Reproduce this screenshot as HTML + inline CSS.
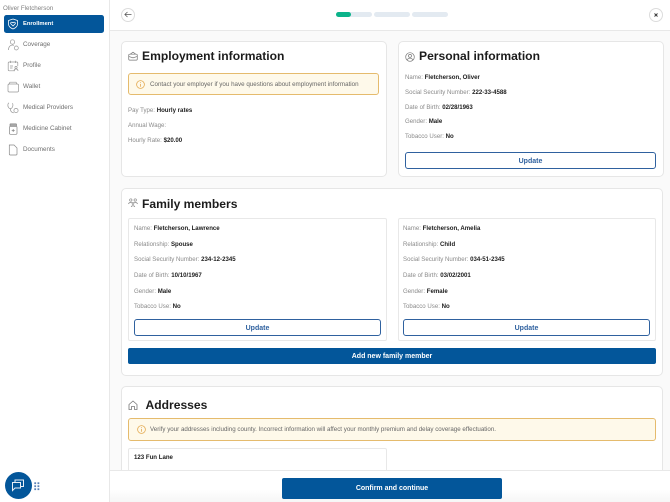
<!DOCTYPE html>
<html lang="en">
<head>
<meta charset="utf-8">
<title>Enrollment</title>
<style>
html,body{margin:0;padding:0;width:670px;height:502px;overflow:hidden;}
body{position:relative;background:#fafafa;font-family:"Liberation Sans",sans-serif;color:#1a1a1a;}
.a{position:absolute;box-sizing:border-box;}
.t{position:absolute;white-space:nowrap;font-size:6.1px;line-height:10px;height:10px;margin-top:1px;color:#8a8a8a;}
.t b{color:#1c1c1c;font-weight:700;}
.nav{position:absolute;left:23px;white-space:nowrap;font-size:6.3px;line-height:10px;margin-top:1px;color:#6f6f6f;}
.card{position:absolute;box-sizing:border-box;background:#fff;border:1px solid #e6e6e6;border-radius:5px;}
.sub{position:absolute;box-sizing:border-box;background:#fff;border:1px solid #e8e8e8;border-radius:2px;}
.h{position:absolute;white-space:nowrap;font-size:12.1px;line-height:16px;font-weight:700;color:#1c1c1c;}
.alert{position:absolute;box-sizing:border-box;background:#fef9ea;border:1px solid #e5bb6d;border-radius:3px;}
.btn{position:absolute;box-sizing:border-box;background:#fff;border:1px solid #2f619f;border-radius:3px;color:#2f619f;font-size:7px;font-weight:700;text-align:center;}
.fill{position:absolute;box-sizing:border-box;background:#03569a;border-radius:2px;color:#fff;font-size:7px;font-weight:700;text-align:center;}
svg{position:absolute;overflow:visible;fill:none;}
</style>
</head>
<body>

<!-- Sidebar -->
<div class="a" style="left:0;top:0;width:110px;height:502px;background:#fff;border-right:1px solid #e8e8e8;"></div>
<div class="t" style="left:3px;top:3px;font-size:6.2px;color:#808080;">Oliver Fletcherson</div>
<div class="a" style="left:4px;top:15px;width:100px;height:18px;background:#03569a;border-radius:2.5px;"></div>
<svg style="left:6.500px;top:17.500px" width="12" height="12" viewBox="0 0 12 12" stroke="#fff" stroke-width=".8"><path d="M6 1 L10.500 2.500 V6 C10.500 8.500 8.500 10 6 11 C3.500 10 1.500 8.500 1.500 6 V2.500Z"/><path d="M6 8 L3.800 5.800 C3 4.500 5 3.500 6 4.800 C7 3.500 9 4.500 8.200 5.800Z"/></svg>
<div class="nav" style="top:18px;color:#fff;font-weight:700;font-size:5.8px;">Enrollment</div>
<div class="nav" style="top:39px;">Coverage</div>
<div class="nav" style="top:60px;">Profile</div>
<div class="nav" style="top:81px;">Wallet</div>
<div class="nav" style="top:102px;">Medical Providers</div>
<div class="nav" style="top:123px;">Medicine Cabinet</div>
<div class="nav" style="top:144px;">Documents</div>
<!-- Nav icons -->
<svg style="left:7px;top:39px" width="12" height="12" viewBox="0 0 12 12" stroke="#969696" stroke-width=".7"><circle cx="5.500" cy="3" r="2.200"/><path d="M1.500 11 C1.500 7.500 3.500 6 5.500 6 C6 6 6.500 6.100 7 6.300"/><circle cx="9.300" cy="9" r="2"/></svg>
<svg style="left:7px;top:60px" width="12" height="12" viewBox="0 0 12 12" stroke="#969696" stroke-width=".7"><path d="M8 10.800H2.200A1 1 0 0 1 1.200 9.800V3A1 1 0 0 1 2.200 2H9.800A1 1 0 0 1 10.800 3V6"/><path d="M3.500 .8V3M8.500 .8V3M3 6H6M3 8H5.500"/><circle cx="9" cy="7.500" r="1.100"/><path d="M7 11C7 9.500 8 9 9 9S11 9.500 11 11"/></svg>
<svg style="left:7px;top:81px" width="12" height="12" viewBox="0 0 12 12" stroke="#969696" stroke-width=".7"><rect x="1" y="3" width="10.500" height="8" rx="1.300"/><path d="M2 3L3 1.200H9L10 3"/></svg>
<svg style="left:7px;top:102px" width="12" height="12" viewBox="0 0 12 12" stroke="#969696" stroke-width=".7"><path d="M2 .8C.5 1.500.6 4 1.500 5.500C2.300 6.800 3.800 7 4.800 6C6 4.800 6.300 2.500 5.500 1.200"/><path d="M3.300 6.800C3.500 9.500 5 11 7 10.800"/><circle cx="9" cy="8.500" r="2.100"/></svg>
<svg style="left:7px;top:123px" width="12" height="12" viewBox="0 0 12 12" stroke="#858585" stroke-width=".7"><rect x="2.500" y="3.300" width="7.500" height="8" rx="1"/><rect x="3" y=".8" width="6.500" height="2.500" rx=".5" fill="#a8a8a8"/><path d="M6.200 6V9M4.700 7.500H7.700"/></svg>
<svg style="left:7px;top:144px" width="12" height="12" viewBox="0 0 12 12" stroke="#888" stroke-width=".7"><path d="M2.300 1H7L10 4V10A1 1 0 0 1 9 11H3.300A1 1 0 0 1 2.300 10Z"/></svg>

<!-- Header -->
<div class="a" style="left:110px;top:0;width:560px;height:31px;background:#fff;border-bottom:1px solid #e8e8e8;"></div>
<div class="a" style="left:121px;top:7.500px;width:14px;height:14px;border:1px solid #dcdcdc;border-radius:50%;"></div>
<svg style="left:124px;top:11px" width="8" height="8" viewBox="0 0 8 8" stroke="#555" stroke-width=".7"><path d="M7.500 3.500H.8M3.500 1L.8 3.500L3.500 6"/></svg>
<div class="a" style="left:336px;top:12px;width:36px;height:4.500px;background:#e3eaf1;border-radius:3px;"></div>
<div class="a" style="left:336px;top:12px;width:14.500px;height:4.500px;background:#0bb38a;border-radius:3px;"></div>
<div class="a" style="left:374px;top:12px;width:36px;height:4.500px;background:#e3eaf1;border-radius:3px;"></div>
<div class="a" style="left:412px;top:12px;width:36px;height:4.500px;background:#e3eaf1;border-radius:3px;"></div>
<div class="a" style="left:649px;top:7.500px;width:14px;height:14px;border:1px solid #dcdcdc;border-radius:50%;"></div>
<svg style="left:654px;top:12.500px" width="4" height="4" viewBox="0 0 4 4" stroke="#333" stroke-width=".9"><path d="M.5.5L3.500 3.500M3.500.5L.5 3.500"/></svg>

<!-- Employment card -->
<div class="card" style="left:121px;top:40.500px;width:266px;height:136px;"></div>
<svg style="left:128px;top:51px" width="10" height="10" viewBox="0 0 11 11" stroke="#777" stroke-width=".8"><rect x=".8" y="3.500" width="9.400" height="6.500" rx="1"/><path d="M.8 6L5.500 7.500L10.200 6M2.500 3.500L5.500 1.300L8.500 3.500"/></svg>
<div class="h" style="left:142px;top:48px;">Employment information</div>
<div class="alert" style="left:128px;top:73px;width:251px;height:22px;"></div>
<svg style="left:136px;top:79.500px" width="9" height="9" viewBox="0 0 9 9" stroke="#e3a94f" stroke-width=".8"><circle cx="4.500" cy="4.500" r="3.900"/><path d="M4.500 4V6.700M4.500 2.300V3.100"/></svg>
<div class="t" style="left:150px;top:79px;color:#666;font-size:6.240px;">Contact your employer if you have questions about employment information</div>
<div class="t" style="left:128px;top:104.500px;">Pay Type: <b>Hourly rates</b></div>
<div class="t" style="left:128px;top:119.500px;">Annual Wage:</div>
<div class="t" style="left:128px;top:134.500px;">Hourly Rate: <b>$20.00</b></div>

<!-- Personal card -->
<div class="card" style="left:397.500px;top:40.500px;width:266px;height:136px;"></div>
<svg style="left:405px;top:51.500px" width="10" height="10" viewBox="0 0 10 10" stroke="#777" stroke-width=".7"><circle cx="5" cy="5" r="4.300"/><circle cx="5" cy="3.900" r="1.500"/><path d="M2.300 8C2.800 6.500 3.800 6.200 5 6.200S7.200 6.500 7.700 8"/></svg>
<div class="h" style="left:419px;top:48px;">Personal information</div>
<div class="t" style="left:405px;top:71.500px;">Name: <b>Fletcherson, Oliver</b></div>
<div class="t" style="left:405px;top:86.500px;">Social Security Number: <b>222-33-4588</b></div>
<div class="t" style="left:405px;top:101.500px;">Date of Birth: <b>02/28/1963</b></div>
<div class="t" style="left:405px;top:116px;">Gender: <b>Male</b></div>
<div class="t" style="left:405px;top:131px;">Tobacco User: <b>No</b></div>
<div class="btn" style="left:405px;top:152px;width:251px;height:17px;line-height:17px;">Update</div>

<!-- Family card -->
<div class="card" style="left:121px;top:187.500px;width:542px;height:188px;"></div>
<svg style="left:128px;top:198px" width="10" height="10" viewBox="0 0 10 10" stroke="#888" stroke-width=".7"><circle cx="2.800" cy="2" r="1.200"/><circle cx="7.200" cy="2" r="1.200"/><circle cx="5" cy="5.500" r=".9"/><path d="M.5 6C1 4 4 4 4.200 5M5.800 5C6 4 9 4 9.500 6M3.200 9C3.500 7.300 6.500 7.300 6.800 9"/></svg>
<div class="h" style="left:142px;top:195.500px;">Family members</div>

<div class="sub" style="left:128px;top:218px;width:259px;height:123px;"></div>
<div class="t" style="left:134px;top:222.500px;">Name: <b>Fletcherson, Lawrence</b></div>
<div class="t" style="left:134px;top:238.500px;">Relationship: <b>Spouse</b></div>
<div class="t" style="left:134px;top:254px;">Social Security Number: <b>234-12-2345</b></div>
<div class="t" style="left:134px;top:269.500px;">Date of Birth: <b>10/10/1967</b></div>
<div class="t" style="left:134px;top:285.500px;">Gender: <b>Male</b></div>
<div class="t" style="left:134px;top:301px;">Tobacco Use: <b>No</b></div>
<div class="btn" style="left:134px;top:318.500px;width:247px;height:17px;line-height:17px;">Update</div>

<div class="sub" style="left:397.500px;top:218px;width:258.500px;height:123px;"></div>
<div class="t" style="left:403px;top:222.500px;">Name: <b>Fletcherson, Amelia</b></div>
<div class="t" style="left:403px;top:238.500px;">Relationship: <b>Child</b></div>
<div class="t" style="left:403px;top:254px;">Social Security Number: <b>034-51-2345</b></div>
<div class="t" style="left:403px;top:269.500px;">Date of Birth: <b>03/02/2001</b></div>
<div class="t" style="left:403px;top:285.500px;">Gender: <b>Female</b></div>
<div class="t" style="left:403px;top:301px;">Tobacco Use: <b>No</b></div>
<div class="btn" style="left:403px;top:318.500px;width:247px;height:17px;line-height:17px;">Update</div>

<div class="fill" style="left:128px;top:348px;width:528px;height:16px;line-height:17.500px;">Add new family member</div>

<!-- Addresses card -->
<div class="card" style="left:121px;top:386px;width:542px;height:116px;"></div>
<svg style="left:128px;top:400px" width="10" height="10" viewBox="0 0 10 10" stroke="#777" stroke-width=".8"><path d="M1 9.500V4.500L5 1L9 4.500V9.500H6.500V6.500H3.500V9.500Z"/></svg>
<div class="h" style="left:145.500px;top:397px;">Addresses</div>
<div class="alert" style="left:128px;top:418px;width:528px;height:22.500px;"></div>
<svg style="left:136.500px;top:424.500px" width="9" height="9" viewBox="0 0 9 9" stroke="#e3a94f" stroke-width=".8"><circle cx="4.500" cy="4.500" r="3.900"/><path d="M4.500 4V6.700M4.500 2.300V3.100"/></svg>
<div class="t" style="left:150px;top:424px;color:#666;font-size:6.190px;">Verify your addresses including county. Incorrect information will affect your monthly premium and delay coverage effectuation.</div>
<div class="sub" style="left:128px;top:447.500px;width:259px;height:54.500px;"></div>
<div class="t" style="left:134px;top:452px;"><b>123 Fun Lane</b></div>

<!-- Footer -->
<div class="a" style="left:110px;top:470px;width:560px;height:32px;background:linear-gradient(#fff 60%,#f6f6f6);border-top:1px solid #e8e8e8;"></div>
<div class="fill" style="left:282px;top:477.500px;width:220px;height:21.500px;line-height:22.500px;">Confirm and continue</div>

<!-- Chat widget -->
<div class="a" style="left:5px;top:472px;width:27px;height:27px;border-radius:50%;background:#03569a;"></div>
<svg style="left:11px;top:478px" width="14" height="14" viewBox="0 0 14 14" stroke="#e8eef5" stroke-width="1"><path d="M1.500 4.500H9.500V10H4L1.500 12.500Z"/><path d="M4 4.500V2H12.500V8.500H9.500"/></svg>
<svg style="left:34px;top:482px" width="6" height="9" viewBox="0 0 6 9"><rect x=".3" y=".3" width="1.800" height="1.800" fill="#5a80b5"/><rect x="3.500" y=".3" width="1.800" height="1.800" fill="#5a80b5"/><rect x=".3" y="3.300" width="1.800" height="1.800" fill="#5a80b5"/><rect x="3.500" y="3.300" width="1.800" height="1.800" fill="#5a80b5"/><rect x=".3" y="6.300" width="1.800" height="1.800" fill="#5a80b5"/><rect x="3.500" y="6.300" width="1.800" height="1.800" fill="#5a80b5"/></svg>

</body>
</html>
